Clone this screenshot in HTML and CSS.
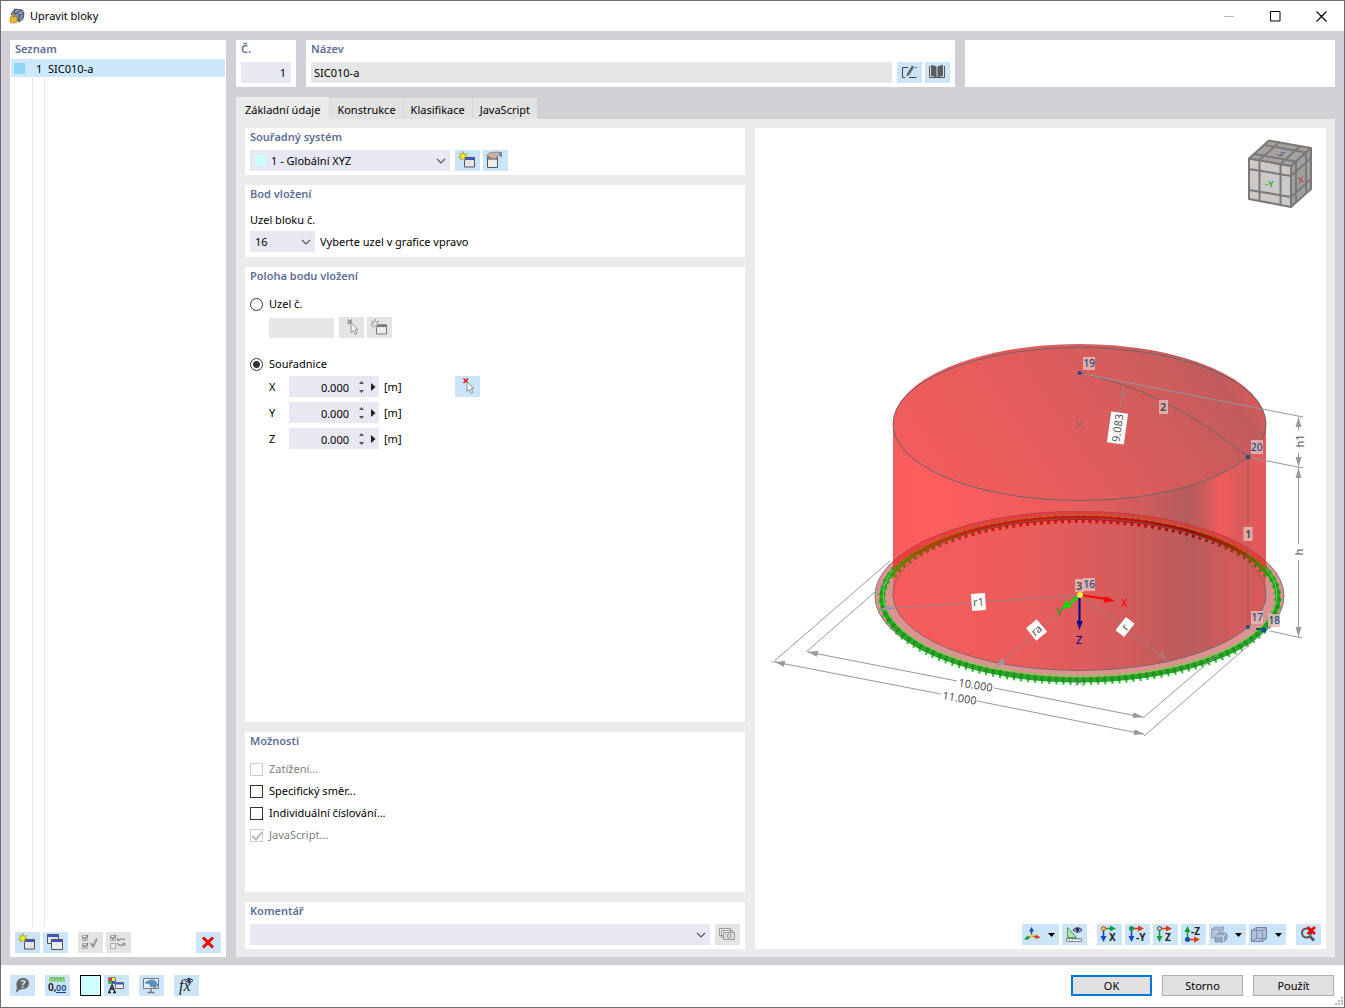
FILE: index.html
```html
<!DOCTYPE html>
<html lang="cs">
<head>
<meta charset="utf-8">
<title>Upravit bloky</title>
<link rel="stylesheet" href="styles.css">
</head>
<body>
<svg class="defs" aria-hidden="true">
  <defs>
    <symbol id="i-new" viewBox="0 0 25 21">
      <path d="M9.500 7.500h10v9.500h-10z" fill="#e6e6e6" stroke="#555"/>
      <path d="M10 8h9v2h-9z" fill="#3c50d8"/>
      <path d="M8 1.500l.8 2.800L12 3.500l-2 2.300 2.500 1.200-3 .3.500 3.200-2-2-2.500 1.500L6 7.500 3.500 7 6 5.500 4.500 3.500l2.500.8z" fill="#ffee22" stroke="#8a8a20" stroke-width=".6"/>
    </symbol>
    <symbol id="i-newoff" viewBox="0 0 25 21">
      <path d="M9.500 8h10v9h-10z" fill="#ececec" stroke="#777"/>
      <path d="M9 7.500h11v2.500H9z" fill="#777"/>
      <path d="M8 2l1 3L12 4l-2 2.500 2.500 1-3 .5.500 3-2-2-2.500 1.500L6 8 3.500 7.500 6 6 4.500 4 7 5z" fill="#ddd" stroke="#999" stroke-width=".7"/>
    </symbol>
    <symbol id="i-copy" viewBox="0 0 25 21">
      <path d="M4.500 2.500h11v9h-11z" fill="#dde6f0" stroke="#555"/><path d="M5 3h10v2H5z" fill="#3c50d8"/>
      <path d="M8.500 7.500h11v10h-11z" fill="#ececec" stroke="#555"/><path d="M9 8h10v2H9z" fill="#3c50d8"/>
    </symbol>
    <symbol id="i-hand" viewBox="0 0 25 21">
      <path d="M4.500 7.500h10v10h-10z" fill="#ececec" stroke="#555"/><path d="M5 8h9v2H5z" fill="#999"/>
      <path d="M3 6l4-3.500 9-.5 1 3-3 1-1 3-2-1-3 1-1-2z" fill="#c9b3a2" stroke="#86766a" stroke-width=".7"/>
      <path d="M15 2h4v5h-2z" fill="#6b91bd"/>
    </symbol>
    <symbol id="i-checks" viewBox="0 0 25 21">
      <path d="M4.500 3.500h5v5h-5zM4.500 11.500h5v5h-5z" fill="#eee" stroke="#aaa"/>
      <path d="M5 5l2 2 3-4M5 13l2 2 3-4" fill="none" stroke="#777" stroke-width="1.200"/>
      <path d="M12.500 11l2.500 3.500 4-8" fill="none" stroke="#999" stroke-width="2"/>
    </symbol>
    <symbol id="i-invert" viewBox="0 0 25 21">
      <path d="M4.500 3.500h5v5h-5zM4.500 11.500h5v5h-5z" fill="#eee" stroke="#aaa"/>
      <path d="M5 5l2 2 3-4" fill="none" stroke="#777" stroke-width="1.200"/>
      <path d="M19 8c-2-2-4-1-6 0M11 11c2 3 5 3 7 1" fill="none" stroke="#999" stroke-width="1.600"/>
      <path d="M11 9V5l3 4zM19.500 14.500v-4l-3.500 1z" fill="#999"/>
    </symbol>
    <symbol id="i-del" viewBox="0 0 25 21">
      <path d="M7 5.500l10 10M17 5.500l-10 10" stroke="#f00000" stroke-width="3"/>
    </symbol>
    <symbol id="i-edit" viewBox="0 0 25 21">
      <path d="M11 5.500H5.500v10H8M12 15.500h7.500M18 5.500h1.500" fill="none" stroke="#444"/>
      <path d="M9.500 14.500l.5-3 5-8 2.300 1.500-5 8z" fill="#666"/>
    </symbol>
    <symbol id="i-book" viewBox="0 0 25 21">
      <path d="M4.500 4v11.500h15V4" fill="none" stroke="#555"/>
      <path d="M6 3q3 0 5.500 1.500V16Q9 14 6 14zM18 3q-3 0-5.500 1.500V16q2.500-2 5.500-2z" fill="#5c5c5c"/>
    </symbol>
    <symbol id="i-pick" viewBox="0 0 25 21">
      <path d="M8.500 2.500l4.500 4.500M13 2.500L8.500 7" stroke="currentColor" stroke-width="1.400"/>
      <path d="M12 5.500v10l2.300-2 2 4 1.700-1-2-3.700h3z" fill="#f6f6f6" stroke="#777" stroke-width=".8"/>
    </symbol>
    <symbol id="i-cards" viewBox="0 0 25 21">
      <path d="M4.500 4.500h11v7h-11zM6.500 6.500h11v7h-11z" fill="#eee" stroke="#999"/>
      <path d="M8.500 8.500h11v7h-11z" fill="#ddd" stroke="#999"/><circle cx="14" cy="12" r="2" fill="none" stroke="#999"/>
    </symbol>
    <symbol id="i-help" viewBox="0 0 25 21">
      <path d="M13 3c4 0 6 2.500 6 5.500S16.500 14 13 14l-3 .5L5.500 18 7 12.500C5 8 8 3 13 3z" fill="#666"/>
      <text x="13" y="13" text-anchor="middle" font-size="11" font-weight="700" fill="#cce4f7">?</text>
    </symbol>
    <symbol id="i-units" viewBox="0 0 25 21">
      <path d="M4 2h16v5H4z" fill="#8fd08a"/><path d="M6.500 2v2M9.500 2v3M12.500 2v2M15.500 2v3M18.500 2v2" stroke="#5aa55a"/>
      <text x="3" y="16" font-size="10" font-weight="600" fill="#111">0,</text>
      <text x="11" y="16" font-size="9" font-weight="600" fill="#1c3f8c">00</text>
      <path d="M11 17.500h10" stroke="#1c3f8c"/>
    </symbol>
    <symbol id="i-display" viewBox="0 0 25 21">
      <path d="M4.500 2.500h7v6h-7z" fill="#222"/><path d="M5 3h3v3H5z" fill="#e33"/><path d="M8 3h3v3H8z" fill="#fe2"/><path d="M5 6h3v2.500H5z" fill="#2b3"/><path d="M8 6h3v2.500H8z" fill="#25e"/>
      <path d="M5 17l3-7 3 7M6 14h4M4 17.500h3M9 17.500h3" fill="none" stroke="#222" stroke-width="1.300"/>
      <path d="M11.500 7.500h8v6h-8z" fill="#ececec" stroke="#667"/><path d="M12 8h7v1.500h-7z" fill="#3c50d8"/>
    </symbol>
    <symbol id="i-monitor" viewBox="0 0 25 21">
      <path d="M4.500 3.500h15v10h-15z" fill="#dcebf7" stroke="#777"/><path d="M12 14v3M8.500 17.500h7" stroke="#777" stroke-width="1.400"/>
      <path d="M6 8q6-5 10-2l3 4-4 3-1-2-2 1-1-3q-3-1-5-1z" fill="#5f8fbd" stroke="#416c99" stroke-width=".6"/>
    </symbol>
    <symbol id="i-fx" viewBox="0 0 25 21">
      <text x="5" y="16" font-family="Liberation Serif, serif" font-size="16" font-style="italic" fill="#222">fx</text>
      <path d="M11 5.500q4-4 8 0-4 4-8 0z" fill="#fff" stroke="#224"/><circle cx="15" cy="5.500" r="1.800" fill="#336"/>
    </symbol>
    <symbol id="i-axes" viewBox="0 0 25 21">
      <path d="M9.500 12V6" stroke="#1846c8" stroke-width="1.400"/><path d="M7 7.500l2.500-4.500 2.500 4.500z" fill="#1846c8"/>
      <path d="M9.500 12l6 1" stroke="#e03a10" stroke-width="1.400"/><path d="M14 10.500l4.500 3-5 1.500z" fill="#e03a10"/>
      <path d="M9.500 12l-5 2.500" stroke="#119a40" stroke-width="1.400"/><path d="M2 15.500l3.500-4 1.500 4z" fill="#119a40"/><circle cx="9.500" cy="12" r="1.800" fill="#fc3"/>
    </symbol>
    <symbol id="i-measure" viewBox="0 0 25 21">
      <path d="M5.500 3.500v10h9z" fill="#a9e6a0" stroke="#5a9a60"/><path d="M7.500 9v2.500h2.500z" fill="#cce4f7"/>
      <path d="M4.500 14.500h15v3h-15z" fill="#eee" stroke="#888"/><path d="M7.500 15v1M10.500 15v1M13.500 15v1M16.500 15v1" stroke="#888"/>
      <path d="M11 6q4.500-4.500 9 0-4.500 4.500-9 0z" fill="#dde" stroke="#224"/><circle cx="15.500" cy="5.800" r="2" fill="#336"/>
    </symbol>
    <symbol id="i-vx" viewBox="0 0 25 21">
      <path d="M6.500 4.500h8" stroke="#119a40" stroke-width="1.600"/><path d="M13 1.500l6 3-6 3z" fill="#119a40"/>
      <path d="M6.500 4.500v9" stroke="#1846c8" stroke-width="1.600"/><path d="M3.500 12l3 6 3-6z" fill="#1846c8"/>
      <circle cx="6.500" cy="4.500" r="2" fill="#fd3" stroke="#e03a10"/><text x="12" y="17" class="axis-name">X</text>
    </symbol>
    <symbol id="i-vy" viewBox="0 0 25 21">
      <path d="M6.500 4.500h8" stroke="#e03a10" stroke-width="1.600"/><path d="M13 1.500l6 3-6 3z" fill="#e03a10"/>
      <path d="M6.500 4.500v9" stroke="#1846c8" stroke-width="1.600"/><path d="M3.500 12l3 6 3-6z" fill="#1846c8"/>
      <circle cx="6.500" cy="4.500" r="2.500" fill="#119a40"/><text x="11" y="17" class="axis-name">-Y</text>
    </symbol>
    <symbol id="i-vz" viewBox="0 0 25 21">
      <path d="M6.500 4.500h8" stroke="#e03a10" stroke-width="1.600"/><path d="M13 1.500l6 3-6 3z" fill="#e03a10"/>
      <path d="M6.500 4.500v9" stroke="#119a40" stroke-width="1.600"/><path d="M3.500 12l3 6 3-6z" fill="#119a40"/>
      <circle cx="6.500" cy="4.500" r="2" fill="#fd3" stroke="#1846c8"/><text x="12" y="17" class="axis-name">Z</text>
    </symbol>
    <symbol id="i-vmz" viewBox="0 0 25 21">
      <path d="M6.500 15.500h8" stroke="#e03a10" stroke-width="1.600"/><path d="M13 12.500l6 3-6 3z" fill="#e03a10"/>
      <path d="M6.500 15.500V8" stroke="#119a40" stroke-width="1.600"/><path d="M3.500 8l3-6 3 6z" fill="#119a40"/>
      <circle cx="6.500" cy="15.500" r="2.500" fill="#1846c8"/><text x="10" y="11" class="axis-name">-Z</text>
    </symbol>
    <symbol id="i-blocks" viewBox="0 0 25 21">
      <path d="M2.500 5l3-2h9v4l-3 2v3l-3 2h-6z" fill="#b4c4da" stroke="#8092ac" stroke-width=".7"/>
      <path d="M2.500 5.500h8.500l3.500-2.500M11 5.500V9" fill="none" stroke="#8092ac" stroke-width=".7"/>
      <path d="M6 12l4-3h8v6l-3.500 3H6z" fill="#93a8c6" stroke="#7488a6" stroke-width=".7"/><path d="M6 12h8.500l3.500-3M14.500 12v6" fill="none" stroke="#dbe6f2" stroke-width=".8"/>
    </symbol>
    <symbol id="i-box" viewBox="0 0 25 21">
      <path d="M2.500 6.500l5-3h10v11l-4 3h-11z" fill="#b3c0dc" stroke="#7482a2"/><path d="M2.500 6.500h11v11M13.500 6.500l4-3M7.500 3.500v11l-5 3M7.500 14.500h10" fill="none" stroke="#7482a2" stroke-width=".8"/>
    </symbol>
    <symbol id="i-nozoom" viewBox="0 0 25 21">
      <circle cx="10.500" cy="9" r="4.500" fill="none" stroke="#555" stroke-width="2"/><path d="M14 12.500l4 4" stroke="#555" stroke-width="2.500"/>
      <path d="M11.500 3l7.500 7M19 3l-7.500 7" stroke="#f00000" stroke-width="2.800"/>
    </symbol>
    <symbol id="i-chev" viewBox="0 0 10 6"><path d="M1 1l4 4 4-4" fill="none" stroke="#555" stroke-width="1.200"/></symbol>
    <symbol id="i-spin" viewBox="0 0 20 16">
      <path d="M1 5L3.500 2 6 5zM1 11L3.500 14 6 11z" fill="#555"/><path d="M13 4l4.500 4-4.500 4z" fill="#222"/>
    </symbol>
    <symbol id="i-down" viewBox="0 0 7 4"><path d="M0 0h7L3.500 4z" fill="#000"/></symbol>
  </defs>
</svg>
<div class="window">
  <header class="titlebar">
    <svg class="app-icon" viewBox="0 0 16 16"><path d="M2 6L6 1l7 1 2 3-1 6-4 3z" fill="#7f97b5" stroke="#4a5563"/><path d="M6 1l-1 5 5 6M13 2l-5 3-3 1M15 5l-5 3v5M8 5l4 5" fill="none" stroke="#3c4654" stroke-width=".8"/><path d="M2 9q2.500-4 5 0v1H2z" fill="none" stroke="#b8912c" stroke-width="1.300"/><rect x="1" y="9" width="7" height="6" rx="1" fill="#e5b93a" stroke="#a98424" stroke-width=".6"/></svg>
    <h1>Upravit bloky</h1>
    <div class="win-buttons">
      <button disabled aria-label="Minimalizovat"><svg viewBox="0 0 11 11"><path d="M0 5.500h10" stroke="#bbb"/></svg></button>
      <button aria-label="Maximalizovat"><svg viewBox="0 0 11 11"><path d="M.5.500h9.500v9.500H.5z" fill="none" stroke="#000"/></svg></button>
      <button aria-label="Zavřít"><svg viewBox="0 0 11 11"><path d="M.5.500l10 10M10.500.500l-10 10" stroke="#000" stroke-width="1.100"/></svg></button>
    </div>
  </header>
  <main class="workspace">
    <section class="list-panel">
      <h2>Seznam</h2>
      <ul class="list">
        <li class="selected"><i class="mark"></i><span class="no">1</span><span>SIC010-a</span></li>
      </ul>
      <div class="list-tools">
        <button class="tool" aria-label="Nový"><svg><use href="#i-new"/></svg></button>
        <button class="tool" aria-label="Kopírovat"><svg><use href="#i-copy"/></svg></button>
        <button class="tool spaced" disabled aria-label="Vybrat vše"><svg><use href="#i-checks"/></svg></button>
        <button class="tool" disabled aria-label="Invertovat výběr"><svg><use href="#i-invert"/></svg></button>
        <button class="tool last" aria-label="Smazat"><svg><use href="#i-del"/></svg></button>
      </div>
    </section>
    <div class="detail">
      <div class="top-row">
        <section class="panel"><h2><label for="no">Č.</label></h2><input id="no" class="field num" value="1"></section>
        <section class="panel"><h2><label for="name">Název</label></h2>
          <div class="row"><input id="name" class="field grow readonly" value="SIC010-a" readonly>
          <button class="tool" aria-label="Upravit název"><svg><use href="#i-edit"/></svg></button>
          <button class="tool" aria-label="Knihovna"><svg><use href="#i-book"/></svg></button></div>
        </section>
        <section class="panel"></section>
      </div>
      <nav class="tabs" role="tablist">
        <button role="tab" aria-selected="true">Základní údaje</button><button role="tab">Konstrukce</button><button role="tab">Klasifikace</button><button role="tab">JavaScript</button>
      </nav>
      <div class="page">
        <div class="form">
          <section class="panel"><h2><label for="cs">Souřadný systém</label></h2>
            <div class="row">
              <div class="combo cs"><select id="cs"><option>1 - Globální XYZ</option></select><i class="swatch"></i><svg><use href="#i-chev"/></svg></div>
              <button class="tool" aria-label="Nový souřadný systém"><svg><use href="#i-new"/></svg></button>
              <button class="tool" aria-label="Upravit souřadný systém"><svg><use href="#i-hand"/></svg></button>
            </div>
          </section>
          <section class="panel insert"><h2>Bod vložení</h2>
            <label class="caption" for="node">Uzel bloku č.</label>
            <div class="row">
              <div class="combo node"><select id="node"><option>16</option></select><svg><use href="#i-chev"/></svg></div>
              <span>Vyberte uzel v grafice vpravo</span>
            </div>
          </section>
          <section class="panel position"><h2>Poloha bodu vložení</h2>
            <label class="choice"><input type="radio" name="pos">Uzel č.</label>
            <div class="row node-row">
              <input class="field readonly node-no" disabled aria-label="Číslo uzlu">
              <button class="tool" disabled aria-label="Vybrat uzel"><svg><use href="#i-pick"/></svg></button>
              <button class="tool" disabled aria-label="Nový uzel"><svg><use href="#i-newoff"/></svg></button>
            </div>
            <label class="choice"><input type="radio" name="pos" checked>Souřadnice</label>
            <div class="coords">
              <label for="x">X</label><div class="spin"><input id="x" value="0.000"><svg><use href="#i-spin"/></svg></div><span>[m]</span>
              <button class="tool pick" aria-label="Vybrat bod"><svg><use href="#i-pick"/></svg></button>
              <label for="y">Y</label><div class="spin"><input id="y" value="0.000"><svg><use href="#i-spin"/></svg></div><span>[m]</span>
              <label for="z">Z</label><div class="spin"><input id="z" value="0.000"><svg><use href="#i-spin"/></svg></div><span>[m]</span>
            </div>
          </section>
          <section class="panel options"><h2>Možnosti</h2>
            <label class="choice off"><input type="checkbox" disabled>Zatížení...</label>
            <label class="choice"><input type="checkbox">Specifický směr...</label>
            <label class="choice"><input type="checkbox">Individuální číslování...</label>
            <label class="choice off"><input type="checkbox" disabled checked>JavaScript...</label>
          </section>
          <section class="panel"><h2><label for="comment">Komentář</label></h2>
            <div class="row"><div class="combo grow"><select id="comment"><option></option></select><svg><use href="#i-chev"/></svg></div>
            <button class="tool" disabled aria-label="Uložené komentáře"><svg><use href="#i-cards"/></svg></button></div>
          </section>
        </div>
        <section class="viewer">
          <svg class="scene" viewBox="755 128 571 796" role="img" aria-label="Náhled bloku">
            <defs>
              <linearGradient id="wall" gradientUnits="userSpaceOnUse" x1="893" y1="0" x2="1266" y2="0">
                <stop offset="0" stop-color="#f85c5c"/><stop offset=".1" stop-color="#ff5e5e"/><stop offset=".5" stop-color="#e95c5c"/><stop offset=".68" stop-color="#cc5c5c"/><stop offset=".79" stop-color="#b65c5c"/><stop offset=".84" stop-color="#cf5c5c"/><stop offset=".88" stop-color="#f25c5c"/><stop offset=".93" stop-color="#da5c5c"/><stop offset="1" stop-color="#e55a5a"/>
              </linearGradient>
              <linearGradient id="roof" gradientUnits="userSpaceOnUse" x1="960" y1="510" x2="1225" y2="330">
                <stop offset="0" stop-color="#f25c5c"/><stop offset=".45" stop-color="#e05c5c"/><stop offset=".75" stop-color="#cc5c5c"/><stop offset=".9" stop-color="#c25c5c"/><stop offset="1" stop-color="#e45a5a"/>
              </linearGradient>
              <linearGradient id="floor" gradientUnits="userSpaceOnUse" x1="893" y1="0" x2="1266" y2="0">
                <stop offset="0" stop-color="#f75c5c"/><stop offset=".3" stop-color="#ee5c5c"/><stop offset=".6" stop-color="#d65c5c"/><stop offset=".8" stop-color="#b85c5c"/><stop offset=".9" stop-color="#cf5c5c"/><stop offset="1" stop-color="#d95a5a"/>
              </linearGradient>
              <linearGradient id="supports" gradientUnits="userSpaceOnUse" x1="893" y1="0" x2="1266" y2="0">
                <stop offset="0" stop-color="#5d8a06"/><stop offset=".08" stop-color="#a05006"/><stop offset=".22" stop-color="#cc1c08"/><stop offset=".6" stop-color="#c81010"/><stop offset=".8" stop-color="#980c04"/><stop offset=".93" stop-color="#a03004"/><stop offset="1" stop-color="#4f8a06"/>
              </linearGradient>
              <clipPath id="back"><path d="M893 500h373v94H893z"/></clipPath>
              <clipPath id="front"><path d="M860 500h33v94h373v-94h30v200H860z"/></clipPath>
              <marker id="ar" viewBox="0 0 10 8" refX="10" refY="4" markerWidth="10" markerHeight="8" markerUnits="userSpaceOnUse" orient="auto-start-reverse"><path d="M0 1l10 3-10 3z" fill="#9a9a9e"/></marker>
            </defs>
            <g clip-path="url(#front)">
              <ellipse cx="1079.500" cy="596" rx="204.500" ry="84.500" fill="#dc9292" stroke="#8d7070"/>
              <ellipse cx="1080" cy="599" rx="198" ry="82" fill="none" stroke="#28c42c" stroke-width="8" stroke-dasharray="2 5"/>
              <ellipse cx="1080" cy="598" rx="198" ry="82" fill="none" stroke="#1fae24" stroke-width="5"/>
              <ellipse cx="1080" cy="598" rx="198" ry="82" fill="none" stroke="#2c8a26" stroke-width="5" stroke-dasharray="3 4"/>
              <ellipse cx="1080" cy="595" rx="197" ry="81" fill="none" stroke="#62e034"/>
            </g>
            <path d="M893 420v174.500a186.500 76 0 0 0 373 0V420z" fill="url(#wall)"/>
            <path d="M893 424a186.500 80 0 0 1 373 0a186.500 76.500 0 0 1-373 0z" fill="url(#roof)"/>
            <path d="M893 594.500a186.500 76 0 0 1 373 0a186.500 76 0 0 1-373 0z" fill="url(#floor)"/>
            <g clip-path="url(#back)" fill="none">
              <ellipse cx="1079.500" cy="596" rx="199" ry="80.500" stroke="#e82c2c" stroke-opacity=".65" stroke-width="9"/>
              <ellipse cx="1079.500" cy="596" rx="204.500" ry="84.500" stroke="#b04848"/>
              <ellipse cx="1080" cy="598" rx="196" ry="79" stroke="url(#supports)" stroke-width="8" stroke-dasharray="3 4"/>
              <ellipse cx="1080" cy="598" rx="197" ry="80" stroke="url(#supports)" stroke-width="4"/>
              <ellipse cx="1080" cy="597" rx="198" ry="82" stroke="#a8702c"/>
            </g>
            <g fill="none" stroke="#6f6464">
              <ellipse cx="1079.500" cy="594.500" rx="186.500" ry="76" stroke-opacity=".8"/>
              <path d="M893 424a186.500 76.500 0 0 1 373 0a186.500 76.500 0 0 1-373 0zM1079.500 373Q1166 390 1248 457"/>
              <path d="M1248 457v170" stroke-opacity=".6"/>
              <path d="M1075.500 420.500l8 8M1083.500 420.500l-8 8M1075.500 678l8 8M1083.500 678l-8 8" stroke-opacity=".8"/>
            </g>
            <g fill="none" stroke="#98989c">
              <path d="M772 663l118-102M806 652l84-73M1143 718l75-64M1144 736l120-104"/>
              <path d="M1084 374l219 43M1252 458l51 10M1270 631l32 7"/>
              <path d="M775 662l166 32M977 701l166 33"/>
              <path d="M785 664l-10-2" marker-end="url(#ar)"/><path d="M1133 732l11 2" marker-end="url(#ar)"/>
              <path d="M808 652l149 29M994 688l148 29"/>
              <path d="M818 654l-10-2" marker-end="url(#ar)"/><path d="M1132 715l11 2" marker-end="url(#ar)"/>
              <path d="M1298.500 430v-13" marker-end="url(#ar)"/><path d="M1298.500 453v14" marker-end="url(#ar)"/>
              <path d="M1298.500 544v-76" marker-end="url(#ar)"/><path d="M1298.500 560v77" marker-end="url(#ar)"/>
            </g>
            <g fill="none" stroke="#a17f80">
              <path d="M1080 595L880 609" marker-end="url(#ar)"/><path d="M1080 595l-84 72" marker-end="url(#ar)"/><path d="M1080 595l88 66"/><path d="M1114 448l9-61"/>
            </g>
            <path d="M1168 661l-10-4 4-6zM1123 386l3 11h-7z" fill="#b87070"/>
            <g class="dim">
              <g transform="translate(1117.500 428) rotate(-82)"><path d="M-15.500-8.500h31v17h-31z"/><text y="4">9.083</text></g>
              <g transform="translate(978.500 602) rotate(-4)"><path d="M-7-8.500h14v17H-7z"/><text y="4">r1</text></g>
              <g transform="translate(1036.500 630) rotate(-40)"><path d="M-7-8h14V8H-7z"/><text y="4">ra</text></g>
              <g transform="translate(1125 627) rotate(-52)"><path d="M-8.500-5.500h17v11h-17z"/><text y="4">r</text></g>
              <text transform="translate(975 689) rotate(9)">10.000</text>
              <text transform="translate(959 702) rotate(9)">11.000</text>
              <text transform="translate(1303.500 441) rotate(-90)">h1</text>
              <text transform="translate(1302.500 552) rotate(-90)">h</text>
            </g>
            <g stroke-width="2">
              <path d="M1080 595l26 4" stroke="#f00"/><path d="M1105 596l10 5-11 1.500z" fill="#f00"/>
              <path d="M1080 595l-10 8" stroke="#0d0" stroke-width="3"/><path d="M1062 609l4-9 6 7z" fill="#0d0"/>
              <path d="M1079.500 595v28" stroke="#00008c"/><path d="M1076.500 621h6l-3 9z" fill="#00008c"/>
              <circle cx="1080" cy="595" r="3" fill="#ffe640"/>
            </g>
            <g class="tags">
              <path d="M1083 357h12v13h-12zM1159 400h9v14h-9zM1251 440h12v14h-12zM1243.500 527h9v14h-9zM1075 579h9v13h-9zM1083 578h12v13h-12zM1251 611h12v13h-12zM1268 614h12v13h-12z"/>
              <text x="1083.500" y="367">19</text><text x="1251" y="451">20</text><text x="1083.500" y="588">16</text><text x="1251.500" y="621">17</text><text x="1268.500" y="624">18</text>
              <g class="line-no"><text x="1160" y="411">2</text><text x="1245" y="538">1</text><text x="1076" y="590">3</text></g>
            </g>
            <g fill="#134f80"><circle cx="1079.500" cy="373" r="2"/><circle cx="1248" cy="457" r="2.200"/><circle cx="1248" cy="627" r="2"/><circle cx="1264" cy="630" r="2.500"/><path d="M1256 628h5v2h-5z"/></g>
            <g font-size="11"><text x="1121" y="607" fill="#f00">X</text><text x="1056" y="616" fill="#0a0">Y</text><text x="1076" y="644" fill="#00008c">Z</text></g>
            <g stroke="#7d7874" stroke-width="2" stroke-linejoin="round">
              <path d="M1249 158.500l42 7.500v41l-42-8z" fill="#cacaca"/><path d="M1249 158.500l20-18 42 7.500-20 18z" fill="#a3a3a3"/><path d="M1291 166l20-18v41l-20 18z" fill="#9f9f9f"/>
              <path d="M1259.500 160l20-18M1280.500 164l20-18M1254 154l42 7.500v41M1264 145l42 7.500v41M1259.500 160v41M1280.500 164v41M1249 169l42 7 20-18M1249 190l42 7 20-18" fill="none"/>
            </g>
            <g font-size="9" font-weight="700"><text x="1265" y="187" fill="#35b43c">-Y</text><text transform="translate(1298 185) skewY(-30)" fill="#a85a5a">X</text><text transform="translate(1275 156) skewX(-30) scale(1 .6)" fill="#5b5e86">-Z</text></g>
          </svg>
          <div class="view-tools">
            <button class="tool menu" aria-label="Osy"><svg><use href="#i-axes"/></svg><svg class="arrow"><use href="#i-down"/></svg></button>
            <button class="tool" aria-label="Měření"><svg><use href="#i-measure"/></svg></button>
            <button class="tool spaced" aria-label="Pohled X"><svg><use href="#i-vx"/></svg></button>
            <button class="tool" aria-label="Pohled -Y"><svg><use href="#i-vy"/></svg></button>
            <button class="tool" aria-label="Pohled Z"><svg><use href="#i-vz"/></svg></button>
            <button class="tool" aria-label="Pohled -Z"><svg><use href="#i-vmz"/></svg></button>
            <button class="tool menu" aria-label="Zobrazení"><svg><use href="#i-blocks"/></svg><svg class="arrow"><use href="#i-down"/></svg></button>
            <button class="tool menu" aria-label="Průhlednost"><svg><use href="#i-box"/></svg><svg class="arrow"><use href="#i-down"/></svg></button>
            <button class="tool spaced" aria-label="Zrušit zvětšení"><svg><use href="#i-nozoom"/></svg></button>
          </div>
        </section>
      </div>
    </div>
  </main>
  <footer class="footer">
    <button class="tool" aria-label="Nápověda"><svg><use href="#i-help"/></svg></button>
    <button class="tool" aria-label="Jednotky"><svg><use href="#i-units"/></svg></button>
    <div class="pair"><button class="colour" aria-label="Barva"></button><button class="tool" aria-label="Zobrazit"><svg><use href="#i-display"/></svg></button></div>
    <button class="tool" aria-label="Náhled"><svg><use href="#i-monitor"/></svg></button>
    <button class="tool" aria-label="Vzorce"><svg><use href="#i-fx"/></svg></button>
    <div class="actions"><button class="push primary">OK</button><button class="push">Storno</button><button class="push">Použít</button></div>
    <svg class="grip" viewBox="0 0 9 9"><path d="M6 0h2v2H6zM3 3h2v2H3zM6 3h2v2H6zM0 6h2v2H0zM3 6h2v2H3zM6 6h2v2H6z" fill="#bbb"/></svg>
  </footer>
</div>
</body>
</html>
```
FILE: styles.css
```css
* { box-sizing: border-box; }
body { margin: 0; font-family: "Noto Sans", "Open Sans", sans-serif; font-size: 11px; line-height: 18px; color: #000; }
button, input, select { font: inherit; color: inherit; border: 0; border-radius: 0; margin: 0; padding: 0; appearance: none; }
h1, h2, ul { margin: 0; padding: 0; font-weight: 400; }
.defs { display: none; }

.window { display: flex; flex-direction: column; min-height: 100vh; border: 1px solid #6e6c70; background: #fff; }
.titlebar { display: flex; align-items: center; height: 30px; padding-left: 8px; }
.titlebar h1 { font-size: 11px; margin-left: 5px; }
.app-icon { width: 16px; height: 16px; }
.win-buttons { display: flex; margin-left: auto; }
.win-buttons button { display: flex; justify-content: center; align-items: center; width: 46px; height: 28px; background: none; }
.win-buttons svg { width: 11px; height: 11px; }

.workspace { display: flex; flex: 1; gap: 10px; padding: 9px 9px 8px; background: #d0d0d5; }
.list-panel { display: flex; flex-direction: column; width: 216px; padding: 0 1px 4px; background: #fff; }
h2 { height: 18px; font-size: 11px; font-weight: 600; color: #5e6e96; }
.list-panel h2 { padding-left: 4px; height: 19px; }
.list { flex: 1; margin-bottom: 5px; list-style: none; background: linear-gradient(#e8e8e8, #e8e8e8) 21px 0 / 1px 100% no-repeat, linear-gradient(#e8e8e8, #e8e8e8) 33px 0 / 1px 100% no-repeat; }
.list li { display: flex; align-items: center; height: 18px; padding-left: 3px; background: #cce8ff; }
.list span { padding-top: 2px; }
.mark { width: 11px; height: 11px; margin-right: 8px; background: #8fd6f5; }
.list .no { width: 15px; padding-left: 3px; }
.list-tools { display: flex; gap: 3px; padding: 0 4px; }
.tool { display: flex; flex: none; align-items: center; width: 25px; height: 21px; background: #cce4f7; }
.tool svg { width: 25px; height: 21px; }
.tool:disabled { background: #e4e4e4; color: #888; }
.spaced { margin-left: 7px; }
.last { margin-left: auto; }

.detail { display: flex; flex: 1; flex-direction: column; min-width: 0; }
.top-row { display: grid; grid-template-columns: 60px 1fr 370px; gap: 10px; margin-bottom: 10px; }
.panel { min-width: 0; padding: 0 5px 4px; background: #fff; }
.panel > h2 { margin-bottom: 4px; }
.row { display: flex; align-items: center; gap: 5px; }
.row .tool + .tool { margin-left: -2px; }
.grow { flex: 1; min-width: 0; }
.field { height: 21px; padding: 0 3px; background: #e8e8f2; }
.field.num { display: block; width: 50px; padding-right: 5px; text-align: right; }
.field.readonly { background: #e6e6e6; }

.tabs { display: flex; align-items: flex-end; height: 22px; }
.tabs button { height: 21px; padding: 2px 7px 0; background: #e2e2e2; border-left: 1px solid #d8d8d8; }
.tabs button[aria-selected] { height: 22px; border: 0; padding: 3px 9px 0; background: #ebebeb; }
.page { display: grid; flex: 1; grid-template-columns: 500fr 571fr; gap: 10px; padding: 9px 9px 8px; background: #ebebeb; }
.form { display: flex; flex-direction: column; gap: 10px; min-width: 0; }

.combo { display: grid; align-items: center; background: #e8e8f2; }
.combo > * { grid-area: 1 / 1; }
.combo select { width: 100%; height: 21px; padding-left: 5px; background: none; }
.combo svg { justify-self: end; width: 10px; height: 6px; margin-right: 4px; pointer-events: none; }
.cs { width: 200px; }
.cs select { padding-left: 21px; }
.swatch { width: 11px; height: 11px; margin-left: 5px; background: #ccffff; }
.node { width: 65px; }
.insert { padding-bottom: 5px; }
.caption { display: block; height: 24px; padding-top: 4px; }

.choice { display: flex; align-items: center; gap: 6px; height: 22px; }
.choice input { flex: none; width: 13px; height: 13px; border: 1px solid #333; background: #fff; }
.choice input[type="radio"] { border-radius: 50%; }
.choice input[type="radio"]:checked { background: radial-gradient(circle, #333 0 3px, #fff 4px); }
.choice.off { color: #808080; }
.choice.off input { display: grid; justify-items: center; border-color: #ccc; }
.choice.off input:checked::after { content: ""; width: 4px; height: 8px; border: solid #bbb; border-width: 0 2px 2px 0; transform: rotate(40deg); }
.position { flex: 1; }
.position h2 { margin-bottom: 8px; }
.node-row { margin: 2px 0 15px 19px; }
.node-no { width: 65px; height: 20px; }
.coords { display: grid; grid-template-columns: 15px 90px 66px 25px; gap: 5px; align-items: center; margin: 1px 0 0 19px; }
.coords > label { grid-column: 1; }
.spin { display: grid; align-items: center; background: #e8e8f2; }
.spin > * { grid-area: 1 / 1; }
.spin input { width: 100%; height: 21px; padding: 1px 30px 0 0; text-align: right; background: none; }
.spin svg { justify-self: end; width: 20px; height: 16px; margin-right: 1px; pointer-events: none; }
.pick { color: #e00; }
.options { min-height: 160px; }
.options h2 { margin-bottom: 8px; }

.viewer { display: flex; flex-direction: column; min-width: 0; padding: 0 5px 4px 0; background: #fff; }
.scene { flex: 1; width: calc(100% + 5px); min-height: 0; }
.view-tools { display: flex; justify-content: flex-end; gap: 3px; }
.tool.menu { width: 37px; }
.tool .arrow { width: 7px; height: 4px; margin-left: 1px; }
.axis-name { font-size: 10px; font-weight: 700; fill: #222; }
.dim path { fill: #fff; }
.dim text { font-size: 11px; text-anchor: middle; fill: #555; }
.tags path { fill: #e8b8b8; fill-opacity: .85; }
.tags text { font-size: 10px; font-weight: 500; fill: #134f80; }
.tags .line-no text { font-size: 11px; font-weight: 700; fill: #555; }

.footer { display: flex; align-items: center; gap: 10px; height: 42px; padding: 0 0 1px 9px; }
.pair { display: flex; gap: 3px; }
.colour { width: 21px; height: 21px; border: 1px solid #000; background: #ccffff; }
.actions { display: flex; gap: 10px; margin-left: auto; }
.push { width: 81px; height: 21px; background: #e1e1e1; border: 1px solid #adadad; }
.push.primary { border: 2px solid #0078d7; }
.grip { align-self: flex-end; width: 9px; height: 9px; margin-left: -9px; }
```
